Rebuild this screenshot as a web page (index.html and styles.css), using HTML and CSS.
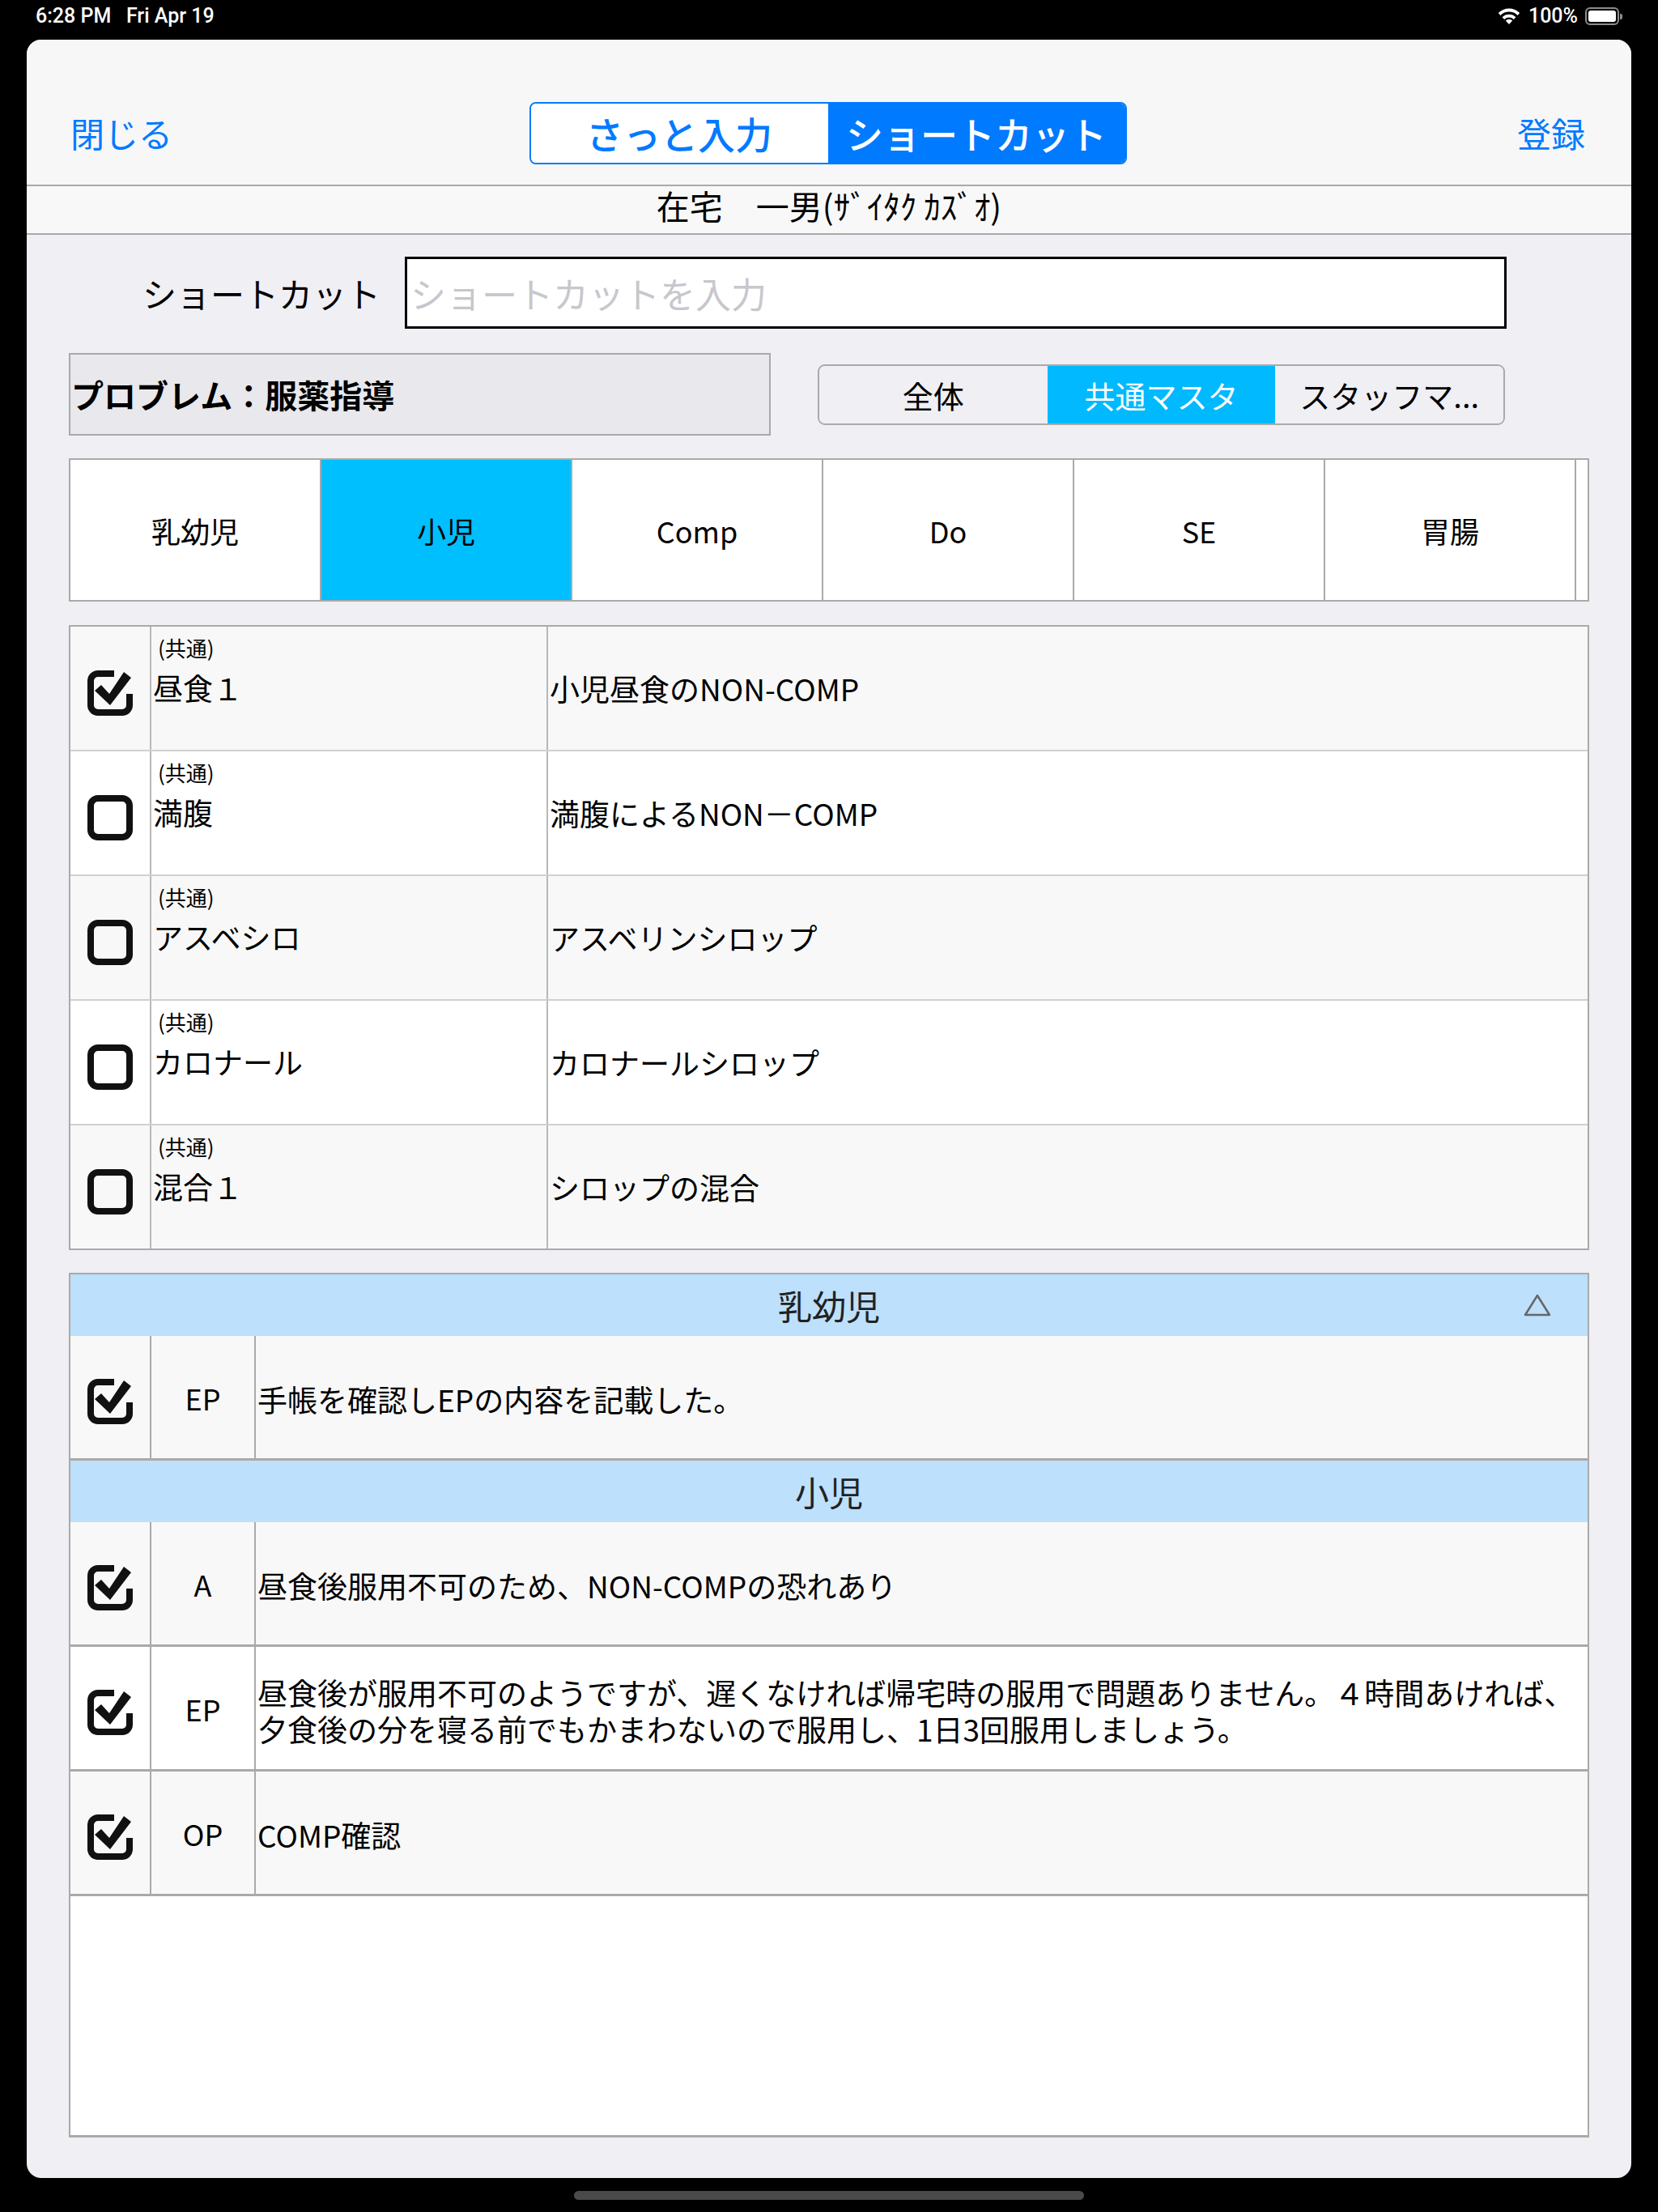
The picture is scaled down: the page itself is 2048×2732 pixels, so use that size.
FILE: index.html
```html
<!DOCTYPE html>
<html lang="ja">
<head>
    <meta charset="UTF-8">
    <meta name="viewport" content="width=device-width, initial-scale=1.0">
    <title>ショートカット入力</title>
    <link rel="stylesheet" href="styles.css">
</head>
<body>
    <svg class="icon-sprite" xmlns="http://www.w3.org/2000/svg">
        <symbol id="box-checked" viewBox="0 0 56 56">
            <path d="M33 4H13a9 9 0 0 0-9 9v30a9 9 0 0 0 9 9h30a9 9 0 0 0 9-9V29" fill="none" stroke="#111" stroke-width="8"/>
            <path d="M9 25l8-7 10 11L45 2l9 7-26 34z" fill="#111"/>
        </symbol>
        <symbol id="box-empty" viewBox="0 0 56 56">
            <rect x="4" y="4" width="48" height="48" rx="9" fill="none" stroke="#111" stroke-width="8"/>
        </symbol>
    </svg>

    <div class="status-bar">
        <span class="status-time">6:28 PM&nbsp;&nbsp;&nbsp;Fri Apr 19</span>
        <div class="status-right">
            <svg class="wifi" viewBox="0 0 30 22" width="30" height="22">
                <path d="M15 21l-4.2-4.6a6 6 0 0 1 8.4 0z" fill="#fff"/>
                <path d="M6.6 12.2a12 12 0 0 1 16.8 0l-2.6 2.8a8.2 8.2 0 0 0-11.6 0z" fill="#fff"/>
                <path d="M1.8 7.1a18.5 18.5 0 0 1 26.4 0l-2.6 2.8a14.7 14.7 0 0 0-21.2 0z" fill="#fff"/>
            </svg>
            <span>100%</span>
            <span class="battery"><span class="battery-level"></span></span>
        </div>
    </div>

    <div class="sheet">
        <header class="nav-bar">
            <button class="nav-btn">閉じる</button>
            <div class="mode-switch">
                <button class="mode-btn">さっと入力</button>
                <button class="mode-btn active">ショートカット</button>
            </div>
            <button class="nav-btn right">登録</button>
        </header>

        <div class="patient-name">在宅　一男(ｻﾞｲﾀｸ ｶｽﾞｵ)</div>

        <div class="shortcut-row">
            <label class="shortcut-label" for="shortcut">ショートカット</label>
            <input type="text" id="shortcut" class="shortcut-input" placeholder="ショートカットを入力">
        </div>

        <div class="problem-row">
            <div class="problem-box">プロブレム：服薬指導</div>
            <div class="scope-switch">
                <div class="scope-btn">全体</div>
                <div class="scope-btn active">共通マスタ</div>
                <div class="scope-btn">スタッフマ...</div>
            </div>
        </div>

        <div class="tab-row">
            <div class="tab">乳幼児</div>
            <div class="tab active">小児</div>
            <div class="tab">Comp</div>
            <div class="tab">Do</div>
            <div class="tab">SE</div>
            <div class="tab">胃腸</div>
            <div class="tab"></div>
        </div>

        <div class="shortcut-table">
            <div class="shortcut-item">
                <div class="check-cell"><svg class="checkbox"><use href="#box-checked"/></svg></div>
                <div class="name-cell">
                    <div class="name-tag">(共通)</div>
                    <div class="name-main">昼食１</div>
                </div>
                <div class="desc-cell">小児昼食のNON-COMP</div>
            </div>
            <div class="shortcut-item">
                <div class="check-cell"><svg class="checkbox"><use href="#box-empty"/></svg></div>
                <div class="name-cell">
                    <div class="name-tag">(共通)</div>
                    <div class="name-main">満腹</div>
                </div>
                <div class="desc-cell">満腹によるNON－COMP</div>
            </div>
            <div class="shortcut-item">
                <div class="check-cell"><svg class="checkbox"><use href="#box-empty"/></svg></div>
                <div class="name-cell">
                    <div class="name-tag">(共通)</div>
                    <div class="name-main">アスベシロ</div>
                </div>
                <div class="desc-cell">アスベリンシロップ</div>
            </div>
            <div class="shortcut-item">
                <div class="check-cell"><svg class="checkbox"><use href="#box-empty"/></svg></div>
                <div class="name-cell">
                    <div class="name-tag">(共通)</div>
                    <div class="name-main">カロナール</div>
                </div>
                <div class="desc-cell">カロナールシロップ</div>
            </div>
            <div class="shortcut-item">
                <div class="check-cell"><svg class="checkbox"><use href="#box-empty"/></svg></div>
                <div class="name-cell">
                    <div class="name-tag">(共通)</div>
                    <div class="name-main">混合１</div>
                </div>
                <div class="desc-cell">シロップの混合</div>
            </div>
        </div>

        <div class="detail-panel">
            <section class="group">
                <div class="group-head">
                    <span class="group-title">乳幼児</span>
                    <svg class="group-toggle" viewBox="0 0 36 30" width="36" height="30">
                        <path d="M18 3L33 27H3z" fill="none" stroke="#666" stroke-width="2.5" stroke-linejoin="round"/>
                    </svg>
                </div>
                <div class="detail-item">
                    <div class="check-cell"><svg class="checkbox"><use href="#box-checked"/></svg></div>
                    <div class="type-cell">EP</div>
                    <div class="detail-text">手帳を確認しEPの内容を記載した。</div>
                </div>
            </section>
            <section class="group">
                <div class="group-head">
                    <span class="group-title">小児</span>
                </div>
                <div class="detail-item">
                    <div class="check-cell"><svg class="checkbox"><use href="#box-checked"/></svg></div>
                    <div class="type-cell">A</div>
                    <div class="detail-text">昼食後服用不可のため、NON-COMPの恐れあり</div>
                </div>
                <div class="detail-item">
                    <div class="check-cell"><svg class="checkbox"><use href="#box-checked"/></svg></div>
                    <div class="type-cell">EP</div>
                    <div class="detail-text">昼食後が服用不可のようですが、遅くなければ帰宅時の服用で問題ありません。４時間あければ、夕食後の分を寝る前でもかまわないので服用し、1日3回服用しましょう。</div>
                </div>
                <div class="detail-item">
                    <div class="check-cell"><svg class="checkbox"><use href="#box-checked"/></svg></div>
                    <div class="type-cell">OP</div>
                    <div class="detail-text">COMP確認</div>
                </div>
            </section>
        </div>
    </div>

    <div class="home-indicator"></div>
</body>
</html>
```

FILE: styles.css
```css
* {
    box-sizing: border-box;
}

body {
    margin: 0;
    width: 2048px;
    height: 2732px;
    overflow: hidden;
    background: #000;
    color: #000;
    font-family: "Noto Sans CJK JP", sans-serif;
}

.icon-sprite {
    display: block;
    width: 0;
    height: 0;
    overflow: hidden;
}

/* status bar */
.status-bar {
    height: 49px;
    padding: 5px 48px 0 44px;
    display: flex;
    justify-content: space-between;
    align-items: flex-start;
    color: #fff;
    font-family: Roboto, "Liberation Sans", sans-serif;
    font-weight: 500;
    font-size: 25px;
    line-height: 30px;
}

.status-right {
    display: flex;
    align-items: center;
    gap: 9px;
    height: 30px;
}

.battery {
    position: relative;
    width: 42px;
    height: 22px;
    border: 2px solid rgba(255, 255, 255, 0.55);
    border-radius: 6px;
    padding: 2px;
    display: flex;
}

.battery::after {
    content: "";
    position: absolute;
    right: -6px;
    top: 6px;
    width: 3px;
    height: 7px;
    border-radius: 0 2px 2px 0;
    background: rgba(255, 255, 255, 0.55);
}

.battery-level {
    flex: 1;
    background: #fff;
    border-radius: 3px;
}

/* sheet */
.sheet {
    margin: 0 33px;
    height: 2641px;
    background: #efeff4;
    border-radius: 18px;
    overflow: hidden;
    display: flex;
    flex-direction: column;
}

.nav-bar {
    height: 181px;
    flex: none;
    padding: 51px 57px 0 54px;
    background: #f7f7f7;
    border-bottom: 2px solid #aaa;
    display: grid;
    grid-template-columns: 1fr auto 1fr;
    align-items: center;
}

.nav-btn {
    justify-self: start;
    border: none;
    background: none;
    padding: 0;
    color: #007aff;
    font-family: "Noto Sans CJK JP", sans-serif;
    font-size: 42px;
    line-height: 50px;
}

.nav-btn.right {
    justify-self: end;
}

.mode-switch {
    display: flex;
    width: 738px;
    height: 77px;
    border: 2px solid #007aff;
    border-radius: 8px;
    overflow: hidden;
}

.mode-btn {
    flex: 1;
    border: none;
    padding: 0;
    background: #fff;
    color: #007aff;
    font-family: "Noto Sans CJK JP", sans-serif;
    font-weight: 500;
    font-size: 46px;
}

.mode-btn.active {
    background: #007aff;
    color: #fff;
}

.patient-name {
    height: 60px;
    flex: none;
    background: #f8f8f8;
    border-bottom: 2px solid #aaa;
    text-align: center;
    font-size: 41px;
    line-height: 46px;
}

/* shortcut input */
.shortcut-row {
    display: flex;
    align-items: center;
    gap: 30px;
    margin-top: 27px;
    padding-left: 143px;
}

.shortcut-label {
    font-size: 42px;
    line-height: 50px;
}

.shortcut-input {
    width: 1361px;
    height: 89px;
    border: 3px solid #000;
    border-radius: 0;
    background: #fff;
    padding: 0 4px;
    font-family: "Noto Sans CJK JP", sans-serif;
    font-size: 44px;
    outline: none;
}

.shortcut-input::placeholder {
    color: #c7c7cd;
}

/* problem + scope */
.problem-row {
    display: flex;
    align-items: center;
    gap: 58px;
    margin-top: 30px;
    padding: 0 52px;
}

.problem-box {
    width: 867px;
    height: 102px;
    background: #e8e8ed;
    border: 2px solid #a9a9a9;
    display: flex;
    align-items: center;
    padding-left: 1px;
    font-size: 40px;
    font-weight: 700;
}

.scope-switch {
    display: flex;
    width: 849px;
    height: 75px;
    border: 2px solid #aaa;
    border-radius: 9px;
    overflow: hidden;
}

.scope-btn {
    flex: 1;
    display: flex;
    align-items: center;
    justify-content: center;
    background: #efeff4;
    font-size: 38px;
}

.scope-btn.active {
    background: #00b9ff;
    color: #fff;
}

/* category tabs */
.tab-row {
    display: flex;
    height: 177px;
    margin: 28px 52px 0;
    border: 2px solid #aaa;
    background: #fff;
    overflow: hidden;
}

.tab {
    flex: 0 0 310px;
    border-right: 2px solid #aaa;
    display: flex;
    align-items: center;
    justify-content: center;
    font-size: 36px;
}

.tab.active {
    background: #00bfff;
}

/* shortcut list */
.shortcut-table {
    margin: 29px 52px 0;
    border: 2px solid #aaa;
    border-bottom: none;
}

.shortcut-item {
    display: grid;
    grid-template-columns: 100px 490px 1fr;
    height: 154px;
    border-bottom: 2px solid #d0d0d0;
    background: #f8f8f8;
}

.shortcut-item:nth-child(even) {
    background: #fff;
}

.shortcut-item:last-child {
    border-bottom-color: #aaa;
}

.check-cell {
    border-right: 2px solid #b8b8b8;
    display: flex;
    align-items: center;
    justify-content: center;
    padding-top: 11px;
}

.checkbox {
    width: 56px;
    height: 56px;
}

.name-cell {
    border-right: 2px solid #b8b8b8;
    padding: 10px 0 0 2px;
}

.name-tag {
    padding-left: 6px;
    font-size: 26px;
    line-height: 32px;
}

.name-main {
    margin-top: 11px;
    font-size: 37px;
    line-height: 44px;
}

.desc-cell {
    display: flex;
    align-items: center;
    padding-left: 2px;
    font-size: 37px;
}

/* selected items */
.detail-panel {
    margin: 28px 52px 0;
    height: 1068px;
    flex: none;
    border: 2px solid #aaa;
    border-bottom-width: 3px;
    background: #fff;
}

.group-head {
    height: 76px;
    background: #bde0fc;
    display: grid;
    grid-template-columns: 1fr auto 1fr;
    align-items: center;
}

.group-title {
    grid-column: 2;
    font-size: 42px;
    line-height: 50px;
    color: #222;
}

.group-toggle {
    justify-self: end;
    margin-right: 44px;
}

.detail-item {
    display: grid;
    grid-template-columns: 100px 129px 1fr;
    height: 154px;
    border-bottom: 3px solid #aaa;
    background: #f8f8f8;
}

.detail-item:nth-child(odd) {
    background: #fff;
}

.detail-item .check-cell,
.type-cell {
    border-right: 2px solid #aaa;
}

.type-cell {
    display: flex;
    align-items: center;
    justify-content: center;
    font-size: 36px;
}

.detail-text {
    display: flex;
    align-items: center;
    padding: 6px 4px 0 2px;
    font-size: 37px;
    line-height: 45px;
}

.home-indicator {
    width: 630px;
    height: 11px;
    margin: 16px auto 0;
    border-radius: 6px;
    background: #4a4a4a;
}
```
